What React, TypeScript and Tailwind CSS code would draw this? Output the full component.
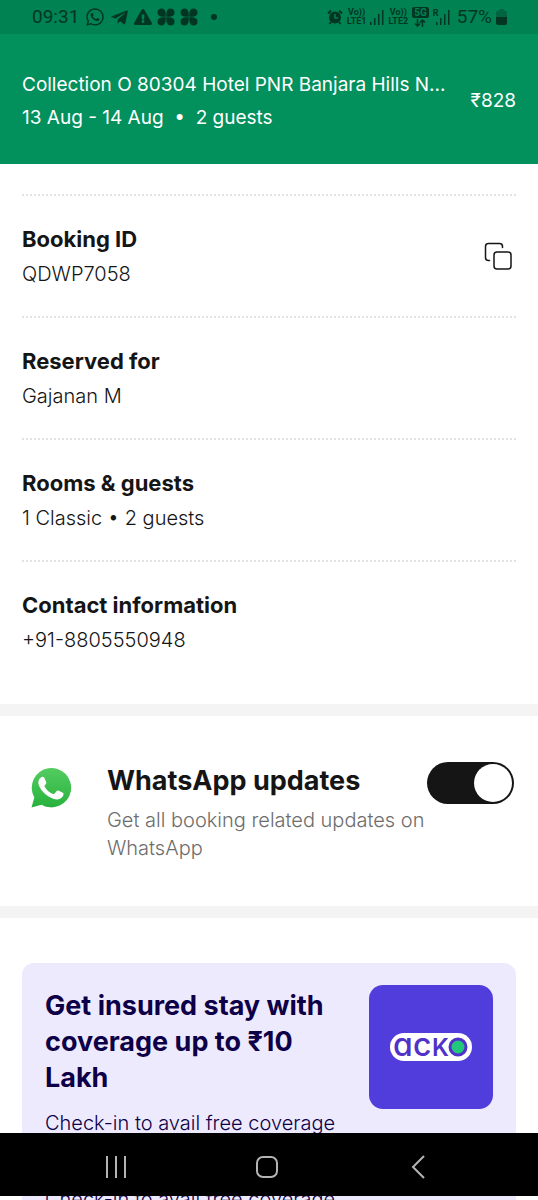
import { useState } from "react";
import { FaWhatsapp, FaTelegramPlane, FaExclamationTriangle } from "react-icons/fa";

const details = [
  { title: "Booking ID", value: "QDWP7058", copy: true },
  { title: "Reserved for", value: "Gajanan M" },
  { title: "Rooms & guests", value: "1 Classic • 2 guests" },
  { title: "Contact information", value: "+91-8805550948" },
];

function FanIcon() {
  return (
    <svg width="18" height="18" viewBox="0 0 18 18" fill="currentColor" aria-hidden="true">
      <path d="M8.7 8.7C3 9.200 0.500 7.500 0.500 4.500C0.500 1.500 2.500 0.500 4.500 0.500C7.800 0.500 9 3.500 8.700 8.700Z" />
      <path d="M9.3 8.7C15 9.200 17.500 7.500 17.500 4.500C17.500 1.500 15.500 0.500 13.500 0.500C10.200 0.500 9 3.500 9.300 8.700Z" />
      <path d="M8.7 9.3C3 8.800 0.500 10.500 0.500 13.500C0.500 16.500 2.500 17.500 4.500 17.500C7.800 17.500 9 14.500 8.700 9.300Z" />
      <path d="M9.3 9.3C15 8.800 17.500 10.500 17.500 13.500C17.500 16.500 15.500 17.500 13.500 17.500C10.200 17.500 9 14.500 9.300 9.300Z" />
    </svg>
  );
}

function AlarmIcon() {
  return (
    <svg width="16" height="16" viewBox="0 0 16 16" fill="none" aria-hidden="true">
      <circle cx="8" cy="8.500" r="6" fill="currentColor" />
      <path d="M1 4.500L4 1.500M15 4.500L12 1.500M4 13L2.500 15M12 13L13.500 15" stroke="currentColor" strokeWidth="1.800" />
      <path d="M8 5V9H11" stroke="#008253" strokeWidth="1.400" />
    </svg>
  );
}

function SignalIcon() {
  return (
    <svg width="14" height="15" viewBox="0 0 14 15" fill="currentColor" aria-hidden="true">
      <rect x="0" y="12" width="1.500" height="3" />
      <rect x="4" y="8" width="1.500" height="7" />
      <rect x="8" y="4" width="1.500" height="11" />
      <rect x="12" y="0" width="1.500" height="15" />
    </svg>
  );
}

function VolteLabel({ line }: { line: string }) {
  return (
    <span className="flex flex-col items-center font-['Roboto','Noto_Sans',sans-serif] text-[9px] leading-[9px] font-bold">
      <span>Vo))</span>
      <span>{line}</span>
    </span>
  );
}

function StatusBar() {
  return (
    <div className="flex h-[34px] shrink-0 items-center justify-between bg-[#008253] pr-[31px] pl-8 text-[#023622]">
      <div className="flex items-center gap-[5px]">
        <span className="mr-px font-['Roboto',sans-serif] text-[19px] leading-6">09:31</span>
        <FaWhatsapp size={20} />
        <FaTelegramPlane size={19} />
        <FaExclamationTriangle size={18} />
        <FanIcon />
        <FanIcon />
        <span className="ml-2 size-[6px] rounded-full bg-current" />
      </div>
      <div className="flex items-center gap-[4px]">
        <AlarmIcon />
        <VolteLabel line="LTE1" />
        <SignalIcon />
        <VolteLabel line="LTE2" />
        <span className="flex flex-col items-center gap-px">
          <span className="rounded-[2px] bg-[#023622] px-[2px] font-['Roboto',sans-serif] text-[10px] leading-[11px] font-bold text-[#008253]">
            5G
          </span>
          <svg width="12" height="8" viewBox="0 0 12 8" fill="none" stroke="currentColor" strokeWidth="1.500" aria-hidden="true">
            <path d="M3.500 0V7M1 4.500L3.500 7L6 4.500M8.500 8V1M6 3.500L8.500 1L11 3.500" />
          </svg>
        </span>
        <span className="relative ml-[3px] flex">
          <span className="absolute -top-px -left-[3px] font-['Roboto',sans-serif] text-[9px] leading-[9px] font-bold">R</span>
          <SignalIcon />
        </span>
        <span className="ml-[3px] font-['Roboto',sans-serif] text-[19px] leading-6">57%</span>
        <svg width="11" height="16" viewBox="0 0 11 16" aria-hidden="true">
          <path d="M3.500 0H7.500V1.500H9Q11 1.500 11 4V8H0V4Q0 1.500 2 1.500H3.500Z" fill="#026441" />
          <path d="M0 8H11V14Q11 16 9 16H2Q0 16 0 14Z" fill="currentColor" />
        </svg>
      </div>
    </div>
  );
}

function CopyIcon() {
  return (
    <svg width="28" height="28" viewBox="0 0 28 28" fill="none" stroke="#151515" strokeWidth="1.500" strokeLinecap="round" aria-hidden="true">
      <rect x="10" y="10" width="17" height="17" rx="3" />
      <path d="M5.500 18.500H4.500Q1.500 18.500 1.500 15.500V4.500Q1.500 1.500 4.500 1.500H15.500Q18.500 1.500 18.500 4.500V5.500" />
    </svg>
  );
}

function WhatsAppLogo() {
  return (
    <svg width="42" height="42" viewBox="0 0 42 42" role="img" aria-label="WhatsApp">
      <defs>
        <linearGradient id="wa" x1="0" y1="0" x2="0" y2="1">
          <stop offset="0" stopColor="#54cc61" />
          <stop offset="1" stopColor="#27b23c" />
        </linearGradient>
      </defs>
      <path d="M1.500 40.500L4.300 30.400A19.700 19.700 0 1 1 11.500 37.700Z" fill="url(#wa)" />
      <path
        d="M11.200 10.300C12.200 9.500 13.800 9.600 14.300 10.700L16.300 15.200C16.700 16.200 15.500 17.600 14.700 18.500C14.300 19 14.500 19.500 14.800 20C16.800 23.300 19.500 25.500 23 26.900C23.600 27.200 24.100 27.100 24.500 26.600L26.700 24C27.200 23.400 27.800 23.300 28.400 23.600L32.800 25.700C33.500 26.100 33.700 26.500 33.500 27.300C32.900 30.700 30 32.600 26.700 32.400C19.300 31.600 10.400 24.200 8.500 16.900C7.800 14.200 9.100 11.700 11.200 10.300Z"
        fill="white"
      />
    </svg>
  );
}

function AckoLogo() {
  return (
    <svg width="84" height="28" viewBox="0 0 84 28" role="img" aria-label="acko">
      <rect x="1" y="0" width="82" height="28" rx="14" fill="white" />
      <text
        y="23"
        fill="#5132c8"
        className="font-['Inter',sans-serif] text-[32px] font-medium [font-feature-settings:'cv11']"
      >
        <tspan x="4">a</tspan>
        <tspan x="24">c</tspan>
        <tspan x="43" className="text-[24px] font-semibold">
          K
        </tspan>
      </text>
      <circle cx="69" cy="14" r="8" fill="#23c77b" stroke="#5132c8" strokeWidth="3" />
    </svg>
  );
}

function InsuranceCard() {
  return (
    <section className="mx-[22px] mt-[45px] flex items-start justify-between rounded-xl bg-[#eeeafd] px-[23px] pt-[22px] pb-12 text-[#0d0048]">
      <div className="pt-[3px]">
        <h2 className="max-w-[300px] text-[27px] leading-9 font-bold">
          Get insured stay with coverage up to ₹10 Lakh
        </h2>
        <p className="mt-[13px] text-[20px] leading-7 font-light">Check-in to avail free coverage</p>
      </div>
      <div className="flex h-[124px] w-[124px] shrink-0 items-center justify-center rounded-[14px] bg-[#513ddb]">
        <AckoLogo />
      </div>
    </section>
  );
}

export default function App() {
  const [updates, setUpdates] = useState(true);

  return (
    <div className="flex h-screen flex-col overflow-hidden bg-white font-['Inter','Noto_Sans',sans-serif] text-[#151515]">
      <StatusBar />

      {/* Booking summary */}
      <header className="flex shrink-0 items-center justify-between gap-2 bg-[#02905d] px-[22px] pt-[34px] pb-[30px] text-[19px] text-white">
        <div className="min-w-0 leading-[33px]">
          <h1 className="truncate">Collection O 80304 Hotel PNR Banjara Hills N...</h1>
          <p className="whitespace-pre">13 Aug - 14 Aug  •  2 guests</p>
        </div>
        <span>₹828</span>
      </header>

      <main className="min-h-0 flex-1 overflow-y-auto [scrollbar-width:none]">
        <div className="px-[22px] pt-[30px] pb-[22px]">
          {details.map((item) => (
            <div
              key={item.title}
              className="flex items-center justify-between border-t-2 border-dotted border-[#e2e2e2] pt-[26px] pb-[26px]"
            >
              <div>
                <h2 className="text-[22px] leading-[34px] font-bold">{item.title}</h2>
                <p className="mt-[2px] text-[20px] leading-8 font-light">{item.value}</p>
              </div>
              {item.copy && (
                <button type="button" aria-label="Copy booking ID" className="mr-1">
                  <CopyIcon />
                </button>
              )}
            </div>
          ))}
        </div>

        {/* WhatsApp opt-in */}
        <section className="flex items-start border-y-[12px] border-[#f4f4f4] px-[22px] pt-[46px] pb-11">
          <div className="ml-2 mt-[5px] w-[77px] shrink-0">
            <WhatsAppLogo />
          </div>
          <div className="flex-1">
            <h2 className="text-[27px] leading-[38px] font-bold">WhatsApp updates</h2>
            <p className="mt-[6px] text-[20px] leading-7 font-light text-[#6d6d6d]">
              Get all booking related updates on WhatsApp
            </p>
          </div>
          <label className="mr-[2px] flex h-[42px] w-[87px] shrink-0 cursor-pointer items-center rounded-full bg-[#151515] p-[2px] has-checked:justify-end">
            <input
              type="checkbox"
              aria-label="WhatsApp updates"
              checked={updates}
              onChange={(e) => setUpdates(e.target.checked)}
              className="size-[38px] cursor-pointer appearance-none rounded-full bg-white"
            />
          </label>
        </section>

        <InsuranceCard />
      </main>

      <nav className="grid h-[63px] shrink-0 grid-cols-3 place-items-center bg-black pt-1 pr-11 pl-10 text-[#b4b4b4]">
        <button type="button" aria-label="Recent apps">
          <svg width="22" height="22" viewBox="0 0 22 22" stroke="currentColor" strokeWidth="2">
            <path d="M2 0V22M11 0V22M20 0V22" />
          </svg>
        </button>
        <button type="button" aria-label="Home">
          <svg width="24" height="24" viewBox="0 0 24 24" fill="none" stroke="currentColor" strokeWidth="2">
            <rect x="2" y="2" width="20" height="20" rx="6" />
          </svg>
        </button>
        <button type="button" aria-label="Back">
          <svg width="22" height="24" viewBox="0 0 22 24" fill="none" stroke="currentColor" strokeWidth="2">
            <path d="M17 1L6 12L17 23" />
          </svg>
        </button>
      </nav>

      {/* Sliver of the page showing under the nav bar */}
      <div className="h-1 shrink-0 overflow-hidden px-[22px]">
        <p className="bg-[#eeeafd] px-[23px] text-[20px] leading-[6px] font-light text-[#0d0048]">
          Check-in to avail free coverage
        </p>
      </div>
    </div>
  );
}
